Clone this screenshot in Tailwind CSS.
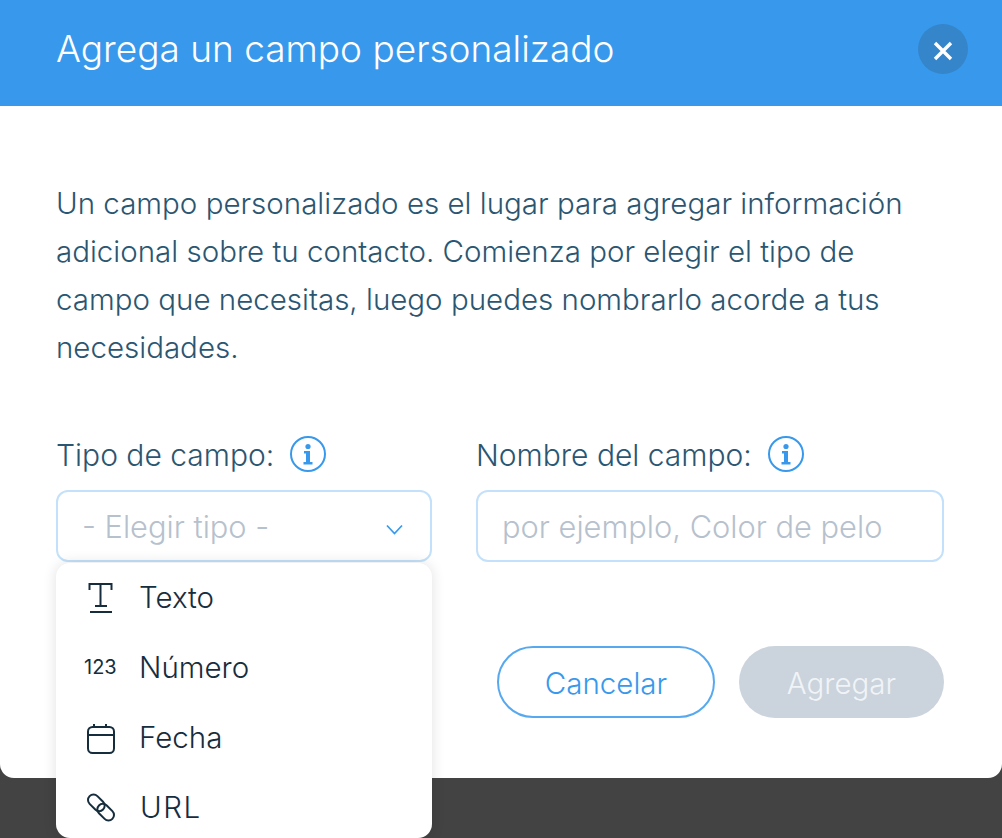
<!DOCTYPE html>
<html lang="en">

<head>
    <meta charset="UTF-8" />
    <title>Agrega un campo personalizado</title>
    <script src="https://cdn.jsdelivr.net/npm/@tailwindcss/browser@4"></script>
</head>

<body class="bg-[#434343] h-[838px] overflow-hidden font-['Inter','Liberation_Sans',sans-serif] font-light">

    <div class="relative">
        <!-- Modal -->
        <div class="bg-white rounded-b-[14px] h-[778px]">
            <div class="h-[106px] bg-[#3899ec] flex items-center justify-between pl-14 pr-[34px] pb-2">
                <h1 class="text-[37px] text-white font-light">Agrega un campo personalizado</h1>
                <button class="w-[50px] h-[50px] rounded-full bg-[#3585cb] flex items-center justify-center">
                    <svg class="mt-1" width="20" height="20" viewBox="0 0 20 20" fill="none" stroke="white" stroke-width="3.4">
                        <path d="M2 2 L18 18 M18 2 L2 18" />
                    </svg>
                </button>
            </div>

            <div class="pl-14 pr-[58px] pt-[73px]">
                <p class="text-[29.5px] leading-[48px] text-[#2b5672]">
                    Un campo personalizado es el lugar para agregar información<br>
                    adicional sobre tu contacto. Comienza por elegir el tipo de<br>
                    campo que necesitas, luego puedes nombrarlo acorde a tus<br>
                    necesidades.
                </p>

                <div class="flex mt-[60px]">
                    <div class="w-[376px] mr-[44px]">
                        <div class="flex items-center h-12 mb-[11px] gap-[16px] text-[30px] text-[#2b5672]">
                            Tipo de campo:
                            <svg class="-mt-0.5" width="36" height="36" viewBox="0 0 36 36">
                                <circle cx="18" cy="18" r="17" fill="none" stroke="#3899ec" stroke-width="2" />
                                <circle cx="18" cy="10.500" r="2.600" fill="#3899ec" />
                                <path d="M14 15h6v11h2.500v2.500h-9V26h2.500v-8.500H14z" fill="#3899ec" />
                            </svg>
                        </div>
                        <div class="h-[72px] pt-0.5 rounded-xl border-2 border-[#c3e1fa] flex items-center justify-between pl-6 pr-[27px] text-[30.800px] text-[#b6c1cd]">
                            - Elegir tipo -
                            <svg class="mt-1" width="17" height="11" viewBox="0 0 17 11" fill="none" stroke="#3899ec" stroke-width="1.700">
                                <path d="M1 1.500 L8.500 9.500 L16 1.500" />
                            </svg>
                        </div>
                    </div>
                    <div class="w-[468px]">
                        <div class="flex items-center h-12 mb-[11px] gap-[16px] text-[30px] text-[#2b5672]">
                            Nombre del campo:
                            <svg class="-mt-0.5" width="36" height="36" viewBox="0 0 36 36">
                                <circle cx="18" cy="18" r="17" fill="none" stroke="#3899ec" stroke-width="2" />
                                <circle cx="18" cy="10.500" r="2.600" fill="#3899ec" />
                                <path d="M14 15h6v11h2.500v2.500h-9V26h2.500v-8.500H14z" fill="#3899ec" />
                            </svg>
                        </div>
                        <div class="h-[72px] pt-0.5 rounded-xl border-2 border-[#c3e1fa] flex items-center pl-6 text-[30.800px] text-[#b6c1cd]">
                            por ejemplo, Color de pelo
                        </div>
                    </div>
                </div>

                <div class="flex justify-end gap-6 mt-[84px]">
                    <button class="w-[218px] h-[72px] pt-0.5 rounded-full border-2 border-[#57a9ef] text-[#3899ec] text-[29.500px]">Cancelar</button>
                    <button class="w-[205px] h-[72px] pt-0.5 rounded-full bg-[#cbd3dc] text-[#f0f4f7] text-[29.500px]">Agregar</button>
                </div>
            </div>
        </div>

        <!-- Dropdown -->
        <div class="absolute left-14 top-[563px] w-[376px] h-[275px] bg-white rounded-[14px] shadow-[0_0_14px_rgba(0,0,0,0.12)] text-[29.500px] text-[#162d3d]">
            <div class="flex items-center h-[70px] pl-[26px] pb-0.5 gap-[21px]">
                <svg width="36" height="36" viewBox="0 0 36 36" fill="none" stroke="#162d3d" stroke-width="2">
                    <path d="M7.500 11V5H29.500V11M18.500 5V27M13 27H25M8 33H30" />
                </svg>
                Texto
            </div>
            <div class="flex items-center h-[70px] pl-[26px] pb-0.5 gap-[21px]">
                <span class="w-9 pl-0.5 text-[20px] font-normal">123</span>
                Número
            </div>
            <div class="flex items-center h-[70px] pl-[26px] pb-0.5 gap-[21px]">
                <svg width="36" height="36" viewBox="0 0 36 36" fill="none" stroke="#162d3d" stroke-width="2">
                    <rect x="6" y="8" width="26" height="26" rx="4.500" />
                    <path d="M6 16H32M12 5V9M24 5V9" />
                </svg>
                Fecha
            </div>
            <div class="flex items-center h-[70px] pl-[26px] pb-0.5 gap-[22px] tracking-[1.5px]">
                <svg width="36" height="36" viewBox="0 0 36 36" fill="none" stroke="#162d3d" stroke-width="2">
                    <g transform="rotate(45 19 18.500)">
                        <rect x="2.900" y="13" width="19" height="11" rx="5.500" />
                        <rect x="16.100" y="13" width="19" height="11" rx="5.500" />
                    </g>
                </svg>
                URL
            </div>
        </div>
    </div>

</body>

</html>
